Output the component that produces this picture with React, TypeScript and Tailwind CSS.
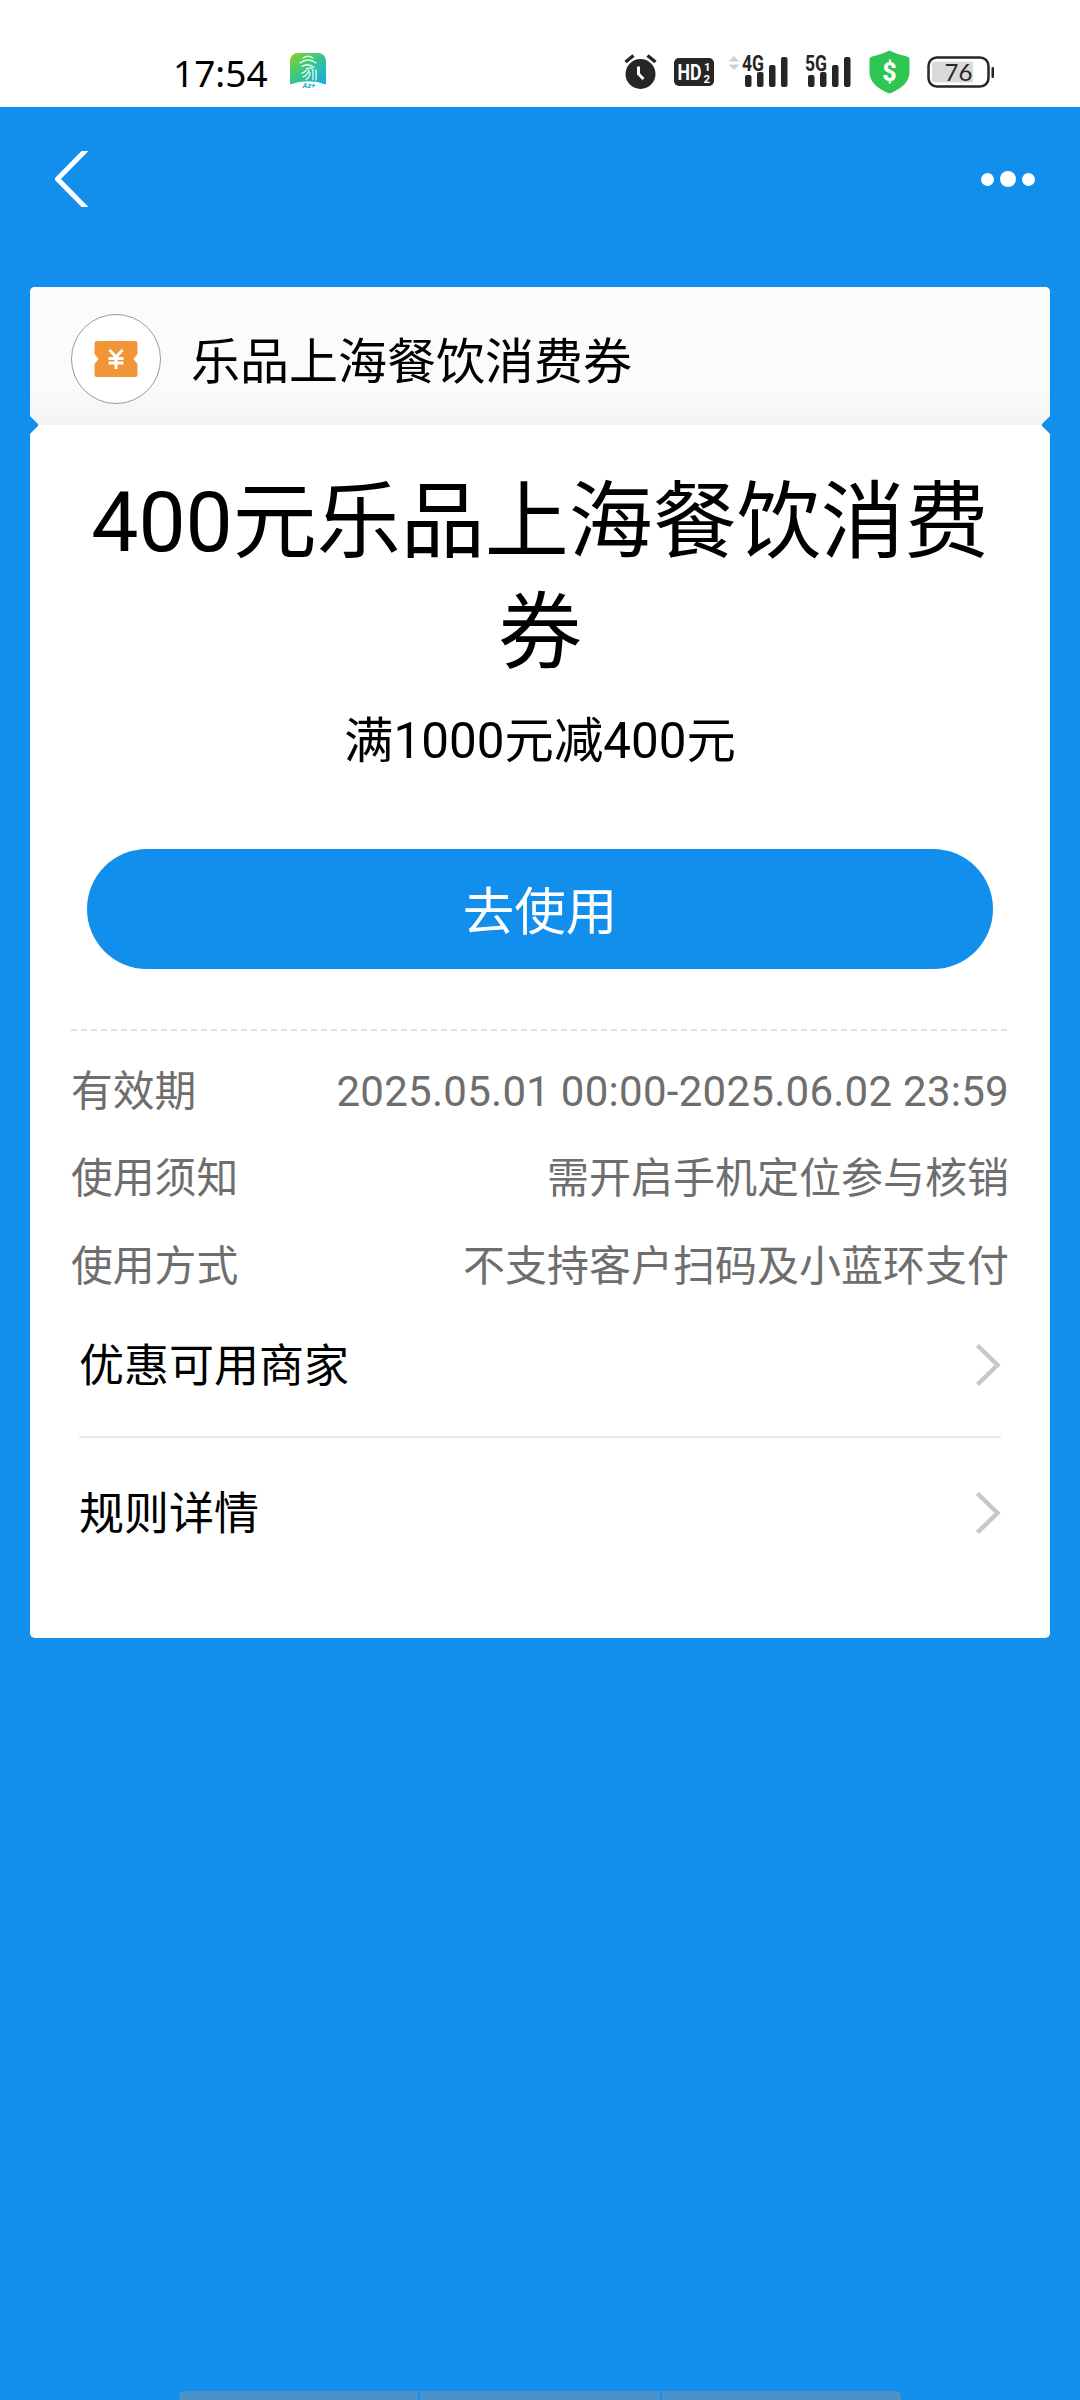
import type { ReactNode } from "react";

const infoRows = [
    { label: "使用须知", value: "需开启手机定位参与核销" },
    { label: "使用方式", value: "不支持客户扫码及小蓝环支付" },
];

function SignalIcon({ label }: { label: string }) {
    return (
        <svg className="mb-[8px] h-[44px] w-[48px]" viewBox="0 -8 48 44" fill="#262626">
            <text x="0" y="17" fontSize="21.5" fontWeight="700" textLength="22" lengthAdjust="spacingAndGlyphs" fontFamily="Roboto, sans-serif">
                {label}
            </text>
            <rect x="3" y="21" width="6.5" height="12" rx="2" />
            <rect x="15" y="18" width="6.5" height="15" rx="2" />
            <rect x="27" y="11" width="6.5" height="22" rx="2" />
            <rect x="39" y="3" width="6.5" height="30" rx="2" />
        </svg>
    );
}

function StatusBar() {
    return (
        <div className="flex h-[107px] shrink-0 items-center bg-white pt-[37px] pr-[85px] pl-[173px]">
            <span className="w-[94px] font-['Noto_Sans',sans-serif] text-[37px] leading-none text-black">17:54</span>

            {/* 支付应用通知 */}
            <svg className="ml-[23px] h-[38px] w-[36px]" viewBox="0 0 36 38" fill="none">
                <defs>
                    <linearGradient id="app" x1="0" y1="0" x2="1" y2="1">
                        <stop offset="0" stopColor="#86d31a" />
                        <stop offset="0.45" stopColor="#3cc784" />
                        <stop offset="1" stopColor="#12a9f0" />
                    </linearGradient>
                </defs>
                <path d="M0 8a8 8 0 0 1 8-8h20a8 8 0 0 1 8 8v23.500q-18-6.500-36 0z" fill="url(#app)" />
                <g stroke="#e6fbf3" strokeWidth="1.3" strokeLinecap="round">
                    <path d="M13 5q5-3.500 10 0M10 10q8-6 16 0M12 13.500q6-4 12 1" />
                    <path d="M12 20q4-1 5-4.500q5-2 6 2v9M13 24q5-2 6-7M16 26.500q4-2 4-7M26 17q0.500 4 0 10" />
                </g>
                <text x="12.500" y="35" fontSize="7.5" fontWeight="700" fontStyle="italic" fill="#2ba9c9" fontFamily="Roboto, sans-serif">
                    Az+
                </text>
            </svg>

            {/* 闹钟 */}
            <svg className="ml-auto h-[36px] w-[33px]" viewBox="0 0 33 36" fill="none">
                <circle cx="16.500" cy="20" r="15" fill="#262626" />
                <path d="M1.500 8l8-6.500M31.500 8l-8-6.500" stroke="#262626" strokeWidth="3.500" />
                <path d="M14.500 12.500v7.500l5 5" stroke="#fff" strokeWidth="3" />
            </svg>

            {/* HD */}
            <svg className="ml-[17px] h-[28px] w-[40px]" viewBox="0 0 40 28">
                <rect width="40" height="28" rx="5" fill="#262626" />
                <g fill="#fff" fontFamily="Roboto, sans-serif" fontWeight="700">
                    <text x="3.500" y="22" fontSize="22.5" textLength="24" lengthAdjust="spacingAndGlyphs">HD</text>
                    <text x="30" y="12.500" fontSize="11.5">1</text>
                    <text x="29.500" y="25" fontSize="11.5">2</text>
                </g>
            </svg>

            <svg className="ml-[14px] h-[36px] w-[12px]" viewBox="0 0 12 36" fill="#cfcfcf">
                <path d="M6 2l5.500 5.500H0.500zM6 16l5.500-5.500H0.500z" />
            </svg>
            <div className="ml-[2px]">
                <SignalIcon label="4G" />
            </div>
            <div className="ml-[15px]">
                <SignalIcon label="5G" />
            </div>

            {/* 安全盾牌 */}
            <svg className="ml-[16px] h-[44px] w-[41px]" viewBox="0 0 41 44">
                <path d="M20.500 0.500Q29 5 38 6.500q2.500 0.500 2.500 3v13Q40 36 20.500 43.500Q1 36 0.500 22.500v-13q0-2.500 2.500-3Q12 5 20.500 0.500z" fill="#2fc552" />
                <text x="20.500" y="31" fontSize="25" fontWeight="800" textAnchor="middle" fill="#fff" fontFamily="Roboto, sans-serif">$</text>
            </svg>

            {/* 电池 */}
            <svg className="ml-[17px] h-[32px] w-[68px]" viewBox="0 0 68 32">
                <rect x="1.500" y="1.500" width="60" height="29" rx="8.500" fill="#fff" stroke="#262626" strokeWidth="2.500" />
                <path d="M9 5.500h37v21H9q-4 0-4-4v-13q0-4 4-4z" fill="#d9d9d9" />
                <rect x="64.500" y="11" width="2.500" height="11" rx="1" fill="#262626" />
                <text x="31.500" y="25" fontSize="24" textAnchor="middle" fill="#262626" fontFamily="Lato, sans-serif">76</text>
            </svg>
        </div>
    );
}

function NavBar() {
    return (
        <div className="flex h-[144px] shrink-0 items-center justify-between pr-[45px] pl-[54px]">
            <svg className="h-[56px] w-[34px]" viewBox="0 0 34 56" fill="none">
                <path d="M33.500 -2.500L3.500 28l30 30.500" stroke="#fff" strokeWidth="5" strokeLinejoin="round" />
            </svg>
            <div className="flex items-center gap-[6px]">
                <span className="h-[13px] w-[13px] rounded-full bg-white" />
                <span className="h-[16px] w-[16px] rounded-full bg-white" />
                <span className="h-[13px] w-[13px] rounded-full bg-white" />
            </div>
        </div>
    );
}

function CouponIcon() {
    return (
        <div className="flex h-[90px] w-[90px] items-center justify-center rounded-full border border-[#999] bg-white">
            <svg className="h-[36px] w-[44px]" viewBox="0 0 44 36" fill="none">
                <path
                    d="M3 0h38a2.500 2.500 0 0 1 2.500 2.500V13l-4 5 4 5v10.500A2.500 2.500 0 0 1 41 36H3a2.500 2.500 0 0 1-2.500-2.500V23l4-5-4-5V2.500A2.500 2.500 0 0 1 3 0z"
                    fill="#f09637"
                />
                <path d="M15.500 9l6.500 7 6.500-7M14.500 17.500h15M14.500 22h15M22 16v12" stroke="#fff" strokeWidth="3" />
            </svg>
        </div>
    );
}

function LinkRow({ children }: { children: ReactNode }) {
    return (
        <div className="flex items-center justify-between text-[45px] leading-none text-black">
            <span className="pt-[4px]">{children}</span>
            <svg className="h-[44px] w-[26px]" viewBox="0 0 26 44" fill="none">
                <path d="M2.500 2.500L22.500 22L2.500 41.500" stroke="#c8c8c8" strokeWidth="4.500" />
            </svg>
        </div>
    );
}

export default function App() {
    return (
        <div className="flex h-[2400px] w-[1080px] flex-col overflow-hidden bg-[#128eec] font-[Roboto,'Noto_Sans_CJK_SC',sans-serif]">
            <StatusBar />
            <NavBar />

            <div className="relative mx-[30px] mt-[36px] h-[1351px] shrink-0 overflow-hidden rounded-[5px] bg-white">
                {/* 券头 */}
                <div className="flex h-[138px] items-center bg-linear-to-b from-[#fbfbfb] from-75% to-[#f3f3f3] pt-[5px] pl-[41px]">
                    <CouponIcon />
                    <span className="ml-[30px] pt-[8px] text-[49px] leading-none text-black">乐品上海餐饮消费券</span>
                </div>

                {/* 左右缺口 */}
                <span className="absolute top-[131px] -left-[8px] h-[14px] w-[14px] rotate-45 rounded-[2px] bg-[#128eec]" />
                <span className="absolute top-[131px] -right-[8px] h-[14px] w-[14px] rotate-45 rounded-[2px] bg-[#128eec]" />

                <div className="px-[41px]">
                    <h1 className="pt-[42px] text-center text-[84px] leading-[111px] text-black">400元乐品上海餐饮消费券</h1>
                    <p className="mt-[22px] text-center text-[49.4px] leading-[60px] text-black">满1000元减400元</p>
                    <button className="mx-[16px] mt-[78px] flex h-[120px] w-[906px] items-center justify-center rounded-full bg-[#128eec] pt-[8px] text-[51.5px] text-white">
                        去使用
                    </button>

                    <div className="mt-[60px] h-[2px] bg-[repeating-linear-gradient(90deg,#e2e2e2_0_6px,transparent_6px_10px)]" />

                    <div className="mt-[17px] text-[41.8px] leading-[87px] text-[#6e6e6e]">
                        <div className="flex justify-between">
                            <span>有效期</span>
                            <span className="text-[42px] tracking-[0.27px]">2025.05.01 00:00-2025.06.02 23:59</span>
                        </div>
                        {infoRows.map((row) => (
                            <div key={row.label} className="flex justify-between pt-px leading-[86.5px]">
                                <span>{row.label}</span>
                                <span className="text-[42px]">{row.value}</span>
                            </div>
                        ))}
                    </div>

                    <div className="px-[8px]">
                        <div className="pt-[30px] pb-[47px]">
                            <LinkRow>优惠可用商家</LinkRow>
                        </div>
                        <div className="h-[2px] bg-[#ebebeb]" />
                        <div className="pt-[50px]">
                            <LinkRow>规则详情</LinkRow>
                        </div>
                    </div>
                </div>
            </div>

            {/* 底部导航条 */}
            <div className="mx-auto mt-auto flex h-[9px] w-[722px] gap-[2px] overflow-hidden rounded-t-[5px]">
                <span className="flex-1 bg-[#4a92c8]" />
                <span className="flex-1 bg-[#4a92c8]" />
                <span className="flex-1 bg-[#4a92c8]" />
            </div>
        </div>
    );
}
